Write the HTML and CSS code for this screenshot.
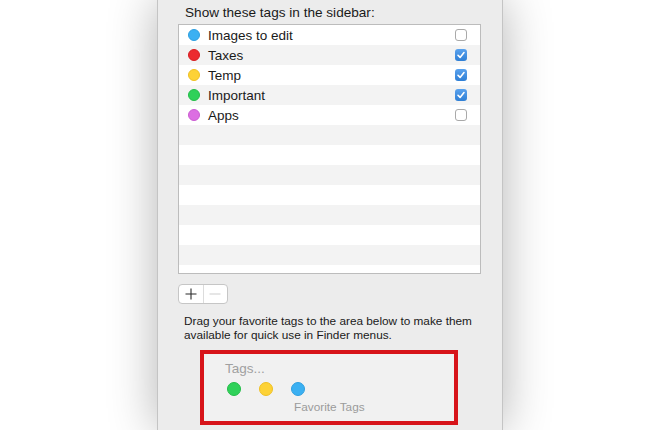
FILE: index.html
```html
<!DOCTYPE html>
<html lang="en">
<head>
    <meta charset="UTF-8">
    <title>Finder Preferences - Tags</title>
    <link rel="stylesheet" href="styles.css">
</head>
<body>
    <div class="stage">
        <div class="panel">
            <p class="heading">Show these tags in the sidebar:</p>
            <div class="tag-list">
                <div class="tag-row">
                    <span class="dot blue"></span>
                    <span class="tag-name">Images to edit</span>
                    <span class="check"></span>
                </div>
                <div class="tag-row">
                    <span class="dot red"></span>
                    <span class="tag-name">Taxes</span>
                    <span class="check on"><svg viewBox="0 0 12 12"><path d="M3 6.3 L5.1 8.4 L9 3.6" /></svg></span>
                </div>
                <div class="tag-row">
                    <span class="dot yellow"></span>
                    <span class="tag-name">Temp</span>
                    <span class="check on"><svg viewBox="0 0 12 12"><path d="M3 6.3 L5.1 8.4 L9 3.6" /></svg></span>
                </div>
                <div class="tag-row">
                    <span class="dot green"></span>
                    <span class="tag-name">Important</span>
                    <span class="check on"><svg viewBox="0 0 12 12"><path d="M3 6.3 L5.1 8.4 L9 3.6" /></svg></span>
                </div>
                <div class="tag-row">
                    <span class="dot purple"></span>
                    <span class="tag-name">Apps</span>
                    <span class="check"></span>
                </div>
                <div class="tag-row"></div>
                <div class="tag-row"></div>
                <div class="tag-row"></div>
                <div class="tag-row"></div>
                <div class="tag-row"></div>
                <div class="tag-row"></div>
                <div class="tag-row"></div>
                <div class="tag-row"></div>
            </div>
            <div class="seg">
                <button class="seg-btn" aria-label="Add"><svg viewBox="0 0 12 12"><path d="M6 0.5 V11.5 M0.5 6 H11.5" /></svg></button>
                <button class="seg-btn off" aria-label="Remove"><svg viewBox="0 0 12 12"><path d="M0.5 6 H11.5" /></svg></button>
            </div>
            <p class="hint">Drag your favorite tags to the area below to make them available for quick use in Finder menus.</p>
            <div class="favorites">
                <span class="fav-title">Tags...</span>
                <div class="fav-dots">
                    <span class="dot big green"></span>
                    <span class="dot big yellow"></span>
                    <span class="dot big blue"></span>
                </div>
                <span class="fav-label">Favorite Tags</span>
            </div>
        </div>
    </div>
</body>
</html>
```

FILE: styles.css
```css
:root {
    --panel-bg: #ececec;
    --row-alt: #f3f3f3;
    --border-color: #bcbcbc;
    --text-color: #1a1a1a;
    --muted: #9b9b9b;
    --accent: #3a88db;
}
body {
    margin: 0;
    background-color: #fff;
    font-family: 'Liberation Sans', Arial, sans-serif;
    color: var(--text-color);
    overflow: hidden;
}
.stage {
    height: 430px;
    padding-left: 157px;
}
.panel {
    width: 346px;
    height: 430px;
    background-color: var(--panel-bg);
    box-shadow: 0 0 45px rgba(0, 0, 0, 0.3);
    padding-left: 20px;
    box-sizing: border-box;
    border-left: 1px solid #c4c4c4;
    border-right: 1px solid #c4c4c4;
}
.heading {
    margin: 0;
    padding: 5px 0 0 7px;
    height: 19px;
    font-size: 13.6px;
    line-height: 16px;
}
.tag-list {
    width: 303px;
    height: 250px;
    box-sizing: border-box;
    border: 1px solid var(--border-color);
    background-color: #fff;
    overflow: hidden;
}
.tag-row {
    display: flex;
    align-items: center;
    height: 20px;
    padding-left: 9px;
    font-size: 13.5px;
}
.tag-row:nth-child(even) {
    background-color: var(--row-alt);
}
.dot {
    display: inline-block;
    width: 12px;
    height: 12px;
    border-radius: 50%;
    box-sizing: border-box;
}
.dot.blue { background-color: #3bb0f2; border: 1px solid #2e9fe0; }
.dot.red { background-color: #ec2b2f; border: 1px solid #d61e22; }
.dot.yellow { background-color: #fdd236; border: 1px solid #efc023; }
.dot.green { background-color: #2fd159; border: 1px solid #23bd48; }
.dot.purple { background-color: #dc6ee2; border: 1px solid #cb5cd2; }
.tag-name {
    margin-left: 8px;
    flex: 1;
}
.check {
    width: 12px;
    height: 12px;
    margin-right: 13px;
    box-sizing: border-box;
    border: 1px solid #a9a9a9;
    border-radius: 3px;
    background-color: #fff;
    display: flex;
}
.check.on {
    border: none;
    background: linear-gradient(#5aa2ee, #2f7fd5);
}
.check svg {
    width: 12px;
    height: 12px;
    fill: none;
    stroke: #fff;
    stroke-width: 1.6;
    stroke-linecap: round;
    stroke-linejoin: round;
}
.seg {
    display: flex;
    width: 50px;
    height: 20px;
    margin-top: 10px;
    box-sizing: border-box;
    border: 1px solid #c6c6c6;
    border-radius: 4px;
    background-color: #fff;
    overflow: hidden;
}
.seg-btn {
    flex: 1;
    display: flex;
    align-items: center;
    justify-content: center;
    border: none;
    background: none;
    padding: 0;
}
.seg-btn svg {
    width: 12px;
    height: 12px;
    fill: none;
    stroke: #2a2a2a;
    stroke-width: 1.1;
}
.seg-btn + .seg-btn {
    border-left: 1px solid #dcdcdc;
}
.seg-btn.off svg {
    stroke: #cdcdcd;
}
.hint {
    margin: 10px 0 0 6px;
    width: 305px;
    font-size: 11.8px;
    line-height: 14px;
}
.favorites {
    display: flex;
    flex-direction: column;
    width: 258px;
    height: 75px;
    margin: 8px 0 0 22px;
    box-sizing: border-box;
    border: 4px solid #d7141a;
    background-color: #f1f1f1;
    padding: 8px 0 0 21px;
}
.fav-title {
    font-size: 13.5px;
    line-height: 14px;
    color: #a0a0a0;
}
.fav-dots {
    display: flex;
    gap: 18px;
    margin: 6px 0 0 2px;
}
.dot.big {
    width: 14px;
    height: 14px;
}
.fav-label {
    margin: 5px 0 0 69px;
    font-size: 11.8px;
    line-height: 12px;
    color: var(--muted);
}
```
